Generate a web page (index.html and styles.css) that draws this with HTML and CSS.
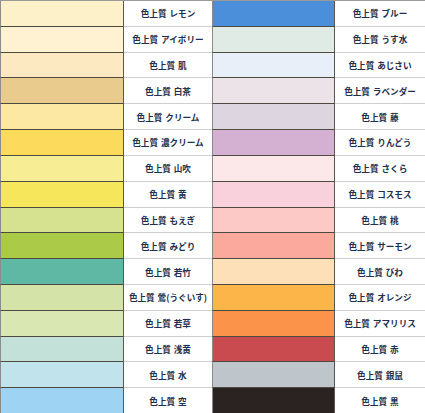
FILE: index.html
```html
<!DOCTYPE html>
<html lang="ja">
<head>
<meta charset="utf-8">
<link rel="stylesheet" href="styles.css">
</head>
<body>
<div class="sheet">
  <div class="sw sw-l" style="background:#fdf1c9"></div><div class="lb">色上質 レモン</div><div class="sw sw-r" style="background:#4b8fdb"></div><div class="lb">色上質 ブルー</div>
  <div class="sw sw-l" style="background:#fef2d3"></div><div class="lb">色上質 アイボリー</div><div class="sw sw-r" style="background:#e1ebe6"></div><div class="lb">色上質 うす水</div>
  <div class="sw sw-l" style="background:#fde9c1"></div><div class="lb">色上質 肌</div><div class="sw sw-r" style="background:#e8eff9"></div><div class="lb">色上質 あじさい</div>
  <div class="sw sw-l" style="background:#e9cb8e"></div><div class="lb">色上質 白茶</div><div class="sw sw-r" style="background:#ebe3e8"></div><div class="lb">色上質 ラベンダー</div>
  <div class="sw sw-l" style="background:#fde8a3"></div><div class="lb">色上質 クリーム</div><div class="sw sw-r" style="background:#ddd5e0"></div><div class="lb">色上質 藤</div>
  <div class="sw sw-l" style="background:#fbda5c"></div><div class="lb">色上質 濃クリーム</div><div class="sw sw-r" style="background:#d4b1d3"></div><div class="lb">色上質 りんどう</div>
  <div class="sw sw-l" style="background:#f7ed95"></div><div class="lb">色上質 山吹</div><div class="sw sw-r" style="background:#fde8e9"></div><div class="lb">色上質 さくら</div>
  <div class="sw sw-l" style="background:#f6e65c"></div><div class="lb">色上質 黄</div><div class="sw sw-r" style="background:#f9d1dc"></div><div class="lb">色上質 コスモス</div>
  <div class="sw sw-l" style="background:#d7e291"></div><div class="lb">色上質 もえぎ</div><div class="sw sw-r" style="background:#fcc9c7"></div><div class="lb">色上質 桃</div>
  <div class="sw sw-l" style="background:#abcb48"></div><div class="lb">色上質 みどり</div><div class="sw sw-r" style="background:#fba99c"></div><div class="lb">色上質 サーモン</div>
  <div class="sw sw-l" style="background:#5fb8a4"></div><div class="lb">色上質 若竹</div><div class="sw sw-r" style="background:#fde0b7"></div><div class="lb">色上質 びわ</div>
  <div class="sw sw-l" style="background:#d4e3a8"></div><div class="lb">色上質 鶯(うぐいす)</div><div class="sw sw-r" style="background:#fbb548"></div><div class="lb">色上質 オレンジ</div>
  <div class="sw sw-l" style="background:#d9e7b3"></div><div class="lb">色上質 若草</div><div class="sw sw-r" style="background:#fb934b"></div><div class="lb">色上質 アマリリス</div>
  <div class="sw sw-l" style="background:#c3e1d9"></div><div class="lb">色上質 浅黄</div><div class="sw sw-r" style="background:#c94b50"></div><div class="lb">色上質 赤</div>
  <div class="sw sw-l" style="background:#c1e3eb"></div><div class="lb">色上質 水</div><div class="sw sw-r" style="background:#bfc6cb"></div><div class="lb">色上質 銀鼠</div>
  <div class="sw sw-l" style="background:#9ed3f3"></div><div class="lb">色上質 空</div><div class="sw sw-r" style="background:#2b2322"></div><div class="lb">色上質 黒</div>
</div>
</body>
</html>
```
FILE: styles.css
```css
html, body {
  margin: 0;
  padding: 0;
  background: #ffffff;
}
.sheet {
  display: grid;
  grid-template-columns: 124px 88px 123px 90px;
  grid-auto-rows: 25.8125px;
  width: 425px;
  height: 413px;
  border-top: 1px solid #9a9a9a;
  box-sizing: border-box;
  font-family: "Noto Sans CJK JP", "Noto Sans", sans-serif;
}
.sw {
  box-sizing: border-box;
  border-bottom: 1.5px solid #4d4a40;
  border-right: 1px solid #5a5850;
}
.sw-l {
  border-left: 1px solid #8c8c8c;
}
.sw-r {
  border-left: 1px solid #8a8a8a;
}
.lb {
  box-sizing: border-box;
  border-bottom: 1px solid #cfcfcf;
  display: flex;
  align-items: center;
  justify-content: center;
  font-size: 8.6px;
  font-weight: 700;
  color: #22304e;
  white-space: nowrap;
  word-spacing: 1px;
}
```
